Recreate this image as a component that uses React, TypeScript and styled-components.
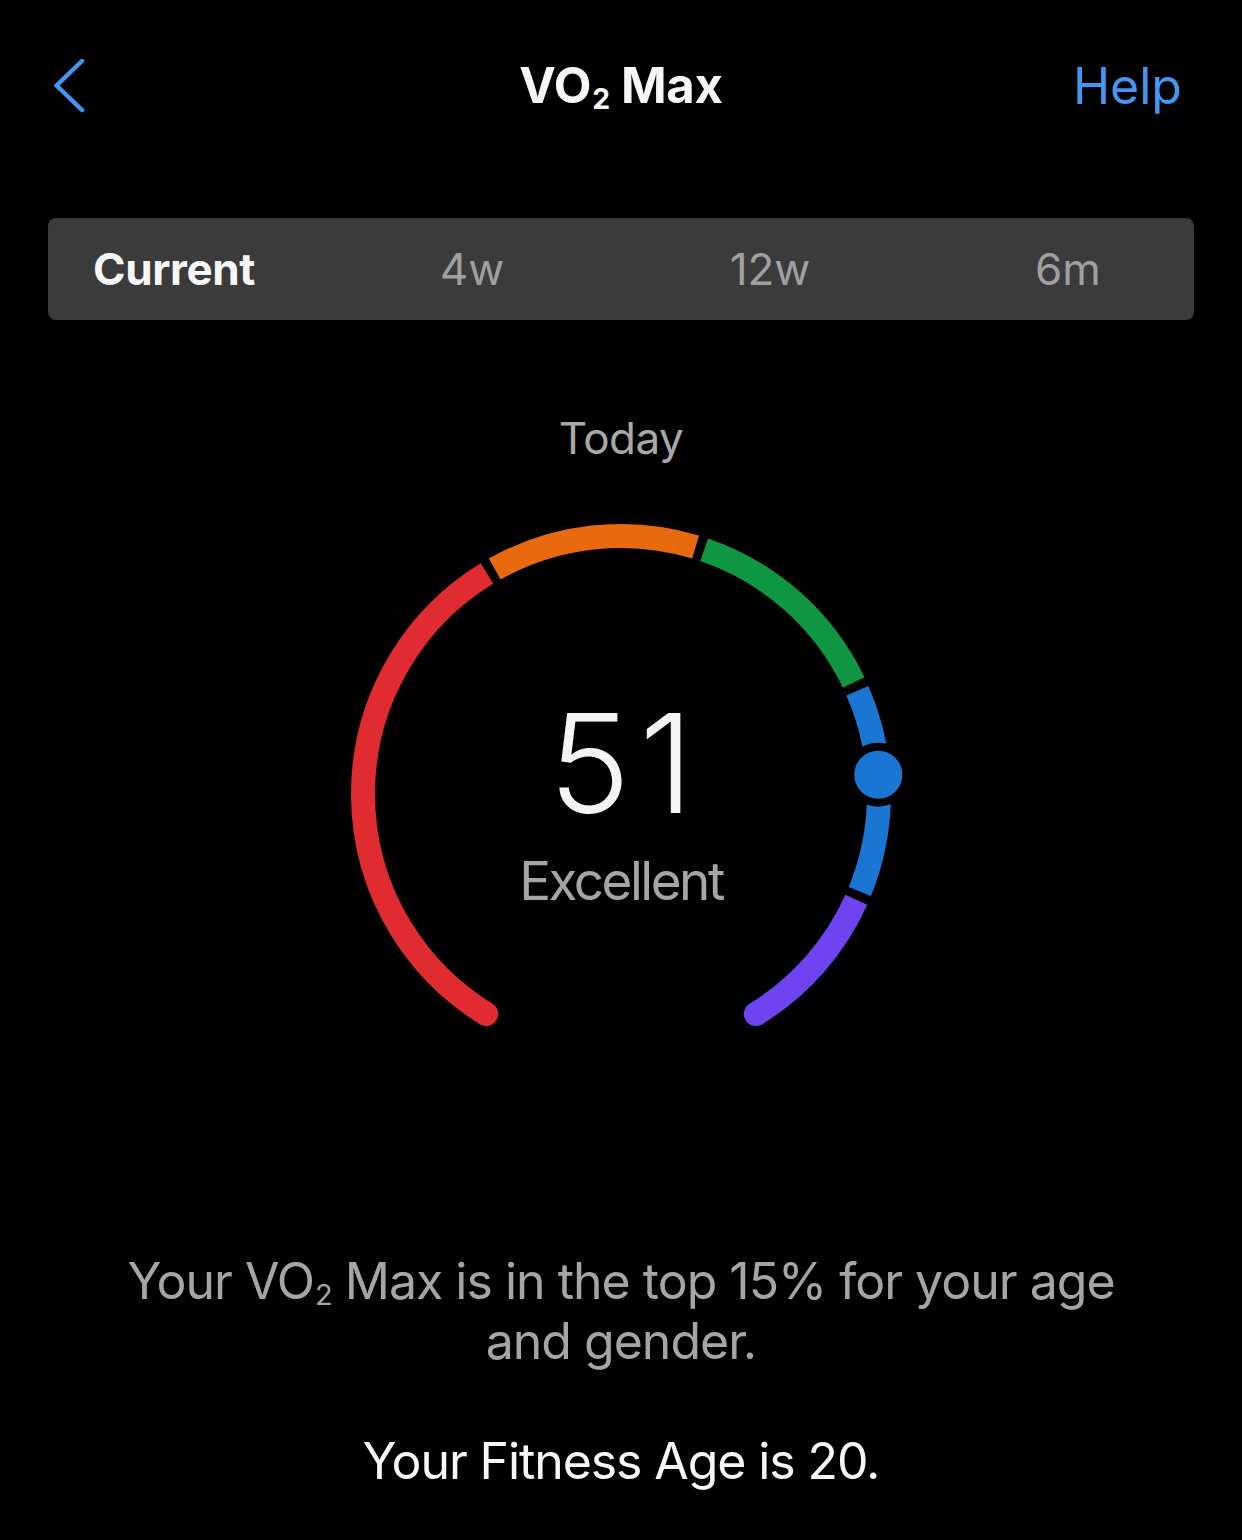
import React from "react";
import styled, { createGlobalStyle } from "styled-components";

const GlobalStyle = createGlobalStyle`
  html, body { margin: 0; padding: 0; background: #000; }
  body { font-family: Inter, "Noto Sans", "Liberation Sans", sans-serif; -webkit-font-smoothing: antialiased; }
`;

const Page = styled.div`
  width: 1242px;
  height: 1540px;
  background: #000;
  color: #f2f2f2;
  display: flex;
  flex-direction: column;
  align-items: stretch;
  overflow: hidden;
`;

const Header = styled.header`
  height: 171px;
  display: grid;
  grid-template-columns: 1fr auto 1fr;
  align-items: center;
  padding: 0 60px 0 54px;
`;

const BackButton = styled.button`
  justify-self: start;
  background: none;
  border: 0;
  padding: 0;
  width: 32px;
  height: 54px;
  display: flex;
  align-items: center;
  cursor: pointer;
`;

const Title = styled.h1`
  margin: 0 0 0 6px;
  font-size: 49px;
  line-height: 1;
  font-weight: 700;
  color: #f7f7f7;
  letter-spacing: -0.3px;
`;

const Sub = styled.sub`
  font-size: 0.58em;
  line-height: 0;
  vertical-align: -0.22em;
  margin-left: 1px;
`;

const HelpLink = styled.a`
  justify-self: end;
  font-size: 50px;
  line-height: 1;
  color: #4197f2;
  text-decoration: none;
`;

const Segmented = styled.nav`
  margin: 47px 48px 0;
  height: 102px;
  border-radius: 8px;
  background: #3b3b3b;
  display: grid;
  grid-template-columns: repeat(4, 200px);
  column-gap: 98px;
  padding: 0 26px;
  align-items: center;
`;

const Tab = styled.div<{ $active?: boolean }>`
  text-align: center;
  font-size: 44px;
  line-height: 1;
  font-weight: ${(p) => (p.$active ? 700 : 400)};
  color: ${(p) => (p.$active ? "#f7f7f7" : "#a0a0a0")};
  letter-spacing: ${(p) => (p.$active ? "-0.4px" : "0")};
`;

const DayLabel = styled.div`
  margin-top: 92px;
  text-align: center;
  font-size: 44px;
  line-height: 52px;
  color: #a8a8a8;
  letter-spacing: -0.5px;
`;

const GaugeWrap = styled.div`
  margin: 30px auto 0;
  width: 600px;
  height: 600px;
  display: grid;
  > * { grid-area: 1 / 1; }
`;

const Readout = styled.div`
  display: flex;
  flex-direction: column;
  align-items: center;
  padding-top: 200px;
`;

const Score = styled.div`
  font-size: 138px;
  line-height: 1;
  font-weight: 300;
  color: #f4f4f4;
  letter-spacing: 9px;
  padding-left: 9px;
`;

const Rating = styled.div`
  margin-top: 23px;
  font-size: 53px;
  line-height: 1;
  color: #a5a5a5;
  letter-spacing: -2.5px;
`;

const Summary = styled.p`
  margin: 157px 0 0;
  text-align: center;
  font-size: 50px;
  line-height: 60px;
  color: #a5a5a5;
  letter-spacing: -1px;
`;

const FitnessAge = styled.p`
  margin: 60px 0 0;
  text-align: center;
  font-size: 50px;
  line-height: 60px;
  color: #f7f7f7;
  letter-spacing: -1.1px;
`;

const CX = 300;
const CY = 300;
const R = 258;
const SW = 24;

const pt = (deg: number) => {
  const a = (deg * Math.PI) / 180;
  return [CX + R * Math.cos(a), CY + R * Math.sin(a)];
};

const arcPath = (a0: number, a1: number) => {
  const [x0, y0] = pt(a0);
  const [x1, y1] = pt(a1);
  const large = a1 - a0 > 180 ? 1 : 0;
  return `M ${x0.toFixed(2)} ${y0.toFixed(2)} A ${R} ${R} 0 ${large} 1 ${x1.toFixed(2)} ${y1.toFixed(2)}`;
};

const segments = [
  { from: 121.5, to: 238.7, color: "#e02b30" },
  { from: 240.7, to: 286.8, color: "#e8690e" },
  { from: 288.8, to: 334.4, color: "#0e9642" },
  { from: 336.4, to: 382.2, color: "#1b76d3" },
  { from: 384.2, to: 418.5, color: "#6f43ef" },
];

const Gauge: React.FC = () => {
  const [sx, sy] = pt(121.5);
  const [ex, ey] = pt(418.5);
  const [dx, dy] = pt(355.7);
  return (
    <svg width="600" height="600" viewBox="0 0 600 600">
      {segments.map((s) => (
        <path key={s.from} d={arcPath(s.from, s.to)} fill="none" stroke={s.color} strokeWidth={SW} />
      ))}
      <circle cx={sx} cy={sy} r={SW / 2} fill="#e02b30" />
      <circle cx={ex} cy={ey} r={SW / 2} fill="#6f43ef" />
      <circle cx={dx} cy={dy} r={28} fill="#1b76d3" stroke="#000" strokeWidth={8} />
    </svg>
  );
};

export default function App() {
  return (
    <Page>
      <GlobalStyle />
      <Header>
        <BackButton aria-label="Back">
          <svg width="32" height="54" viewBox="0 0 32 54">
            <path d="M28 2 L2.5 26.5 L28 51" fill="none" stroke="#4197f2" strokeWidth="4.5" strokeLinecap="round" strokeLinejoin="round" />
          </svg>
        </BackButton>
        <Title>
          VO<Sub>2</Sub> Max
        </Title>
        <HelpLink href="#">Help</HelpLink>
      </Header>
      <Segmented>
        <Tab $active>Current</Tab>
        <Tab>4w</Tab>
        <Tab>12w</Tab>
        <Tab>6m</Tab>
      </Segmented>
      <DayLabel>Today</DayLabel>
      <GaugeWrap>
        <Gauge />
        <Readout>
          <Score>51</Score>
          <Rating>Excellent</Rating>
        </Readout>
      </GaugeWrap>
      <Summary>
        Your VO<Sub>2</Sub> Max is in the top 15% for your age
        <br />
        and gender.
      </Summary>
      <FitnessAge>Your Fitness Age is 20.</FitnessAge>
    </Page>
  );
}
